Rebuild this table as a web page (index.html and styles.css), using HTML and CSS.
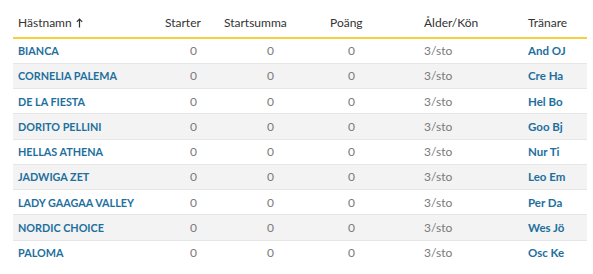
FILE: index.html
```html
<!DOCTYPE html>
<html lang="sv">
<head>
<meta charset="utf-8">
<title>Hästar</title>
<link rel="stylesheet" href="styles.css">
</head>
<body>
<table class="horses">
  <colgroup>
    <col class="w-name"><col class="w-starter"><col class="w-sum"><col class="w-points"><col class="w-age"><col class="w-trainer">
  </colgroup>
  <thead>
    <tr>
      <th class="name">Hästnamn <svg class="arrow" width="7" height="10" viewBox="0 0 7 10"><path d="M3.5 9.5V1M0.8 3.8L3.5 1L6.2 3.8" fill="none" stroke="#333" stroke-width="1.2"/></svg></th>
      <th class="starter">Starter</th>
      <th class="sum">Startsumma</th>
      <th class="points">Poäng</th>
      <th class="age">Ålder/Kön</th>
      <th class="trainer">Tränare</th>
    </tr>
  </thead>
  <tbody>
    <tr><td class="name"><a>BIANCA</a></td><td class="starter">0</td><td class="sum">0</td><td class="points">0</td><td class="age">3/sto</td><td class="trainer"><a>And OJ</a></td></tr>
    <tr><td class="name"><a>CORNELIA PALEMA</a></td><td class="starter">0</td><td class="sum">0</td><td class="points">0</td><td class="age">3/sto</td><td class="trainer"><a>Cre Ha</a></td></tr>
    <tr><td class="name"><a>DE LA FIESTA</a></td><td class="starter">0</td><td class="sum">0</td><td class="points">0</td><td class="age">3/sto</td><td class="trainer"><a>Hel Bo</a></td></tr>
    <tr><td class="name"><a>DORITO PELLINI</a></td><td class="starter">0</td><td class="sum">0</td><td class="points">0</td><td class="age">3/sto</td><td class="trainer"><a>Goo Bj</a></td></tr>
    <tr><td class="name"><a>HELLAS ATHENA</a></td><td class="starter">0</td><td class="sum">0</td><td class="points">0</td><td class="age">3/sto</td><td class="trainer"><a>Nur Ti</a></td></tr>
    <tr><td class="name"><a>JADWIGA ZET</a></td><td class="starter">0</td><td class="sum">0</td><td class="points">0</td><td class="age">3/sto</td><td class="trainer"><a>Leo Em</a></td></tr>
    <tr><td class="name"><a>LADY GAAGAA VALLEY</a></td><td class="starter">0</td><td class="sum">0</td><td class="points">0</td><td class="age">3/sto</td><td class="trainer"><a>Per Da</a></td></tr>
    <tr><td class="name"><a>NORDIC CHOICE</a></td><td class="starter">0</td><td class="sum">0</td><td class="points">0</td><td class="age">3/sto</td><td class="trainer"><a>Wes Jö</a></td></tr>
    <tr><td class="name"><a>PALOMA</a></td><td class="starter">0</td><td class="sum">0</td><td class="points">0</td><td class="age">3/sto</td><td class="trainer"><a>Osc Ke</a></td></tr>
  </tbody>
</table>
</body>
</html>
```
FILE: styles.css
```css
html, body {
  margin: 0;
  padding: 0;
  background: #fff;
}
body {
  padding: 0 6px 0 13px;
  font-family: Lato, "Liberation Sans", sans-serif;
  font-size: 12px;
  color: #7a7a7a;
}
.horses {
  width: 574px;
  border-collapse: collapse;
  table-layout: fixed;
}
.w-name { width: 137px; }
.w-starter { width: 65px; }
.w-sum { width: 95px; }
.w-points { width: 100px; }
.w-age { width: 105px; }
.w-trainer { width: 72px; }

.horses th {
  height: 38px;
  padding: 8px 0 0 0;
  text-align: left;
  font-weight: 400;
  color: #333;
  border-bottom: 2px solid #f5cf3c;
  white-space: nowrap;
  box-sizing: border-box;
}
.horses td {
  height: 25.25px;
  padding: 0;
  text-align: left;
  box-sizing: border-box;
  white-space: nowrap;
}
.horses tbody tr:nth-child(even) td {
  background: #f3f3f3;
  border-top: 1px solid #e6e6e6;
  border-bottom: 1px solid #e6e6e6;
}
.horses a {
  color: #1d6f9e;
  font-weight: 700;
  text-decoration: none;
}
.horses td.name a {
  font-size: 10.8px;
}
.horses td.trainer a {
  font-size: 11.5px;
}
.arrow {
  vertical-align: -1px;
  margin-left: 1px;
}
th.name, td.name { padding-left: 5px; }
th.starter { padding-left: 15px; }
td.starter { padding-left: 40px; }
th.sum { padding-left: 9px; }
td.sum { padding-left: 52px; }
th.points { padding-left: 20px; }
td.points { padding-left: 38px; }
th.age, td.age { padding-left: 14px; }
th.trainer, td.trainer { padding-left: 13px; }
```
